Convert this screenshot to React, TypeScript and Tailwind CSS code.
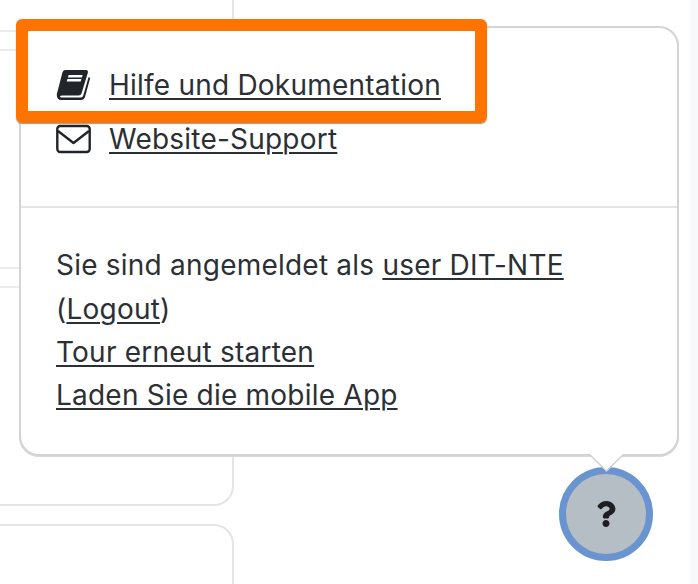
import { FaQuestion } from 'react-icons/fa'

const linkClass = 'underline decoration-[1.5px] underline-offset-[3px]'

const BookIcon = () => (
  <svg className="shrink-0" width="35" height="32" viewBox="0 0 35 32">
    <path
      d="M9 1 H30 Q32.5 1 31.8 4 L25.5 24.5 Q25 26.5 22.5 26.5 H6.5 Q4 26.5 4 27.6 Q4 28.6 6 28.6 H25 Q26.6 28.6 27.2 26.8 L32.6 8 L34.2 9 L29 28 Q28 31 25 31 H5.5 Q0.8 31 0.8 26 Q0.8 24.5 1.4 23 L6.4 3.6 Q7 1 9 1 Z"
      fill="#212529"
    />
    <polygon points="12.6,6 26.6,6 25.9,8.4 11.9,8.4" fill="#fff" />
    <polygon points="11.4,10 25.4,10 24.7,12.4 10.7,12.4" fill="#fff" />
  </svg>
)

const MailIcon = () => (
  <svg className="shrink-0" width="35" height="30" viewBox="0 0 35 30" fill="none" stroke="#212529" strokeWidth="2.4">
    <rect x="1.3" y="2" width="32.4" height="26" rx="3" />
    <path d="M2 7 L17.5 19 L33 7" strokeLinejoin="round" />
  </svg>
)

const HelpPopover = () => (
  <div className="absolute left-[19px] top-[26px] z-10 h-[430px] w-[660px] rounded-[20px] border-2 border-[#d3d4d6] bg-white text-[28px] tracking-[0.22px] text-[#2b3035] shadow-[0_1px_0_#d8d9dc]">
    <div className="flex h-[180px] flex-col gap-[11px] border-b-2 border-[#e3e5e9] px-[35px] pt-[35px]">
      <div className="flex h-[43px] items-center gap-[18px]">
        <BookIcon />
        <a className={linkClass}>Hilfe und Dokumentation</a>
      </div>
      <div className="flex h-[43px] items-center gap-[18px]">
        <MailIcon />
        <a className={linkClass}>Website-Support</a>
      </div>
    </div>
    <div className="px-[35px] pt-[36px] leading-[43.3px]">
      <p>
        Sie sind angemeldet als <a className={linkClass}>user DIT-NTE</a>
      </p>
      <p className="pt-px">
        (<a className={linkClass}>Logout</a>)
      </p>
      <p className="-mt-px">
        <a className={linkClass}>Tour erneut starten</a>
      </p>
      <p>
        <a className={linkClass}>Laden Sie die mobile App</a>
      </p>
    </div>
  </div>
)

export default function App() {
  return (
    <div className="relative flex h-[584px] w-[698px] overflow-hidden bg-white font-['Inter',sans-serif]">
      <div className="flex w-[234px] shrink-0 flex-col gap-[18px]">
        <div className="h-[506px] shrink-0 rounded-br-[20px] border-r-2 border-b-2 border-[#e3e5e9]">
          <div className="mt-[30px] h-[21px] border-y-2 border-[#e9ebee]" />
          <div className="mt-[216px] h-[21px] border-y-2 border-[#e9ebee]" />
        </div>
        <div className="flex-1 rounded-tr-[20px] border-t-2 border-r-2 border-[#e3e5e9]" />
      </div>
      <div className="flex-1" />
      <div className="w-[8px] shrink-0 bg-[#f8f9fa]" />

      <HelpPopover />

      {/* orange tour highlight */}
      <div className="absolute left-[16px] top-[19px] z-20 h-[104px] w-[471px] rounded-[6px] border-[12px] border-[#ff7300] shadow-[0_1px_1px_rgba(0,0,0,0.4)]" />

      <button
        type="button"
        className="absolute left-[559px] top-[467px] flex size-[94px] items-center justify-center rounded-full border-[7px] border-[#6a94cf] bg-[#b5bdc5] text-[#1c1e22]"
      >
        <FaQuestion className="size-[26px]" />
      </button>

      {/* popover arrow */}
      <svg className="absolute left-[588px] top-[453px] z-20" width="37" height="20" viewBox="0 0 37 20">
        <path d="M1 1 L18.5 18 L36 1" fill="#fff" stroke="#cfd0d2" strokeWidth="1.5" />
      </svg>
    </div>
  )
}
